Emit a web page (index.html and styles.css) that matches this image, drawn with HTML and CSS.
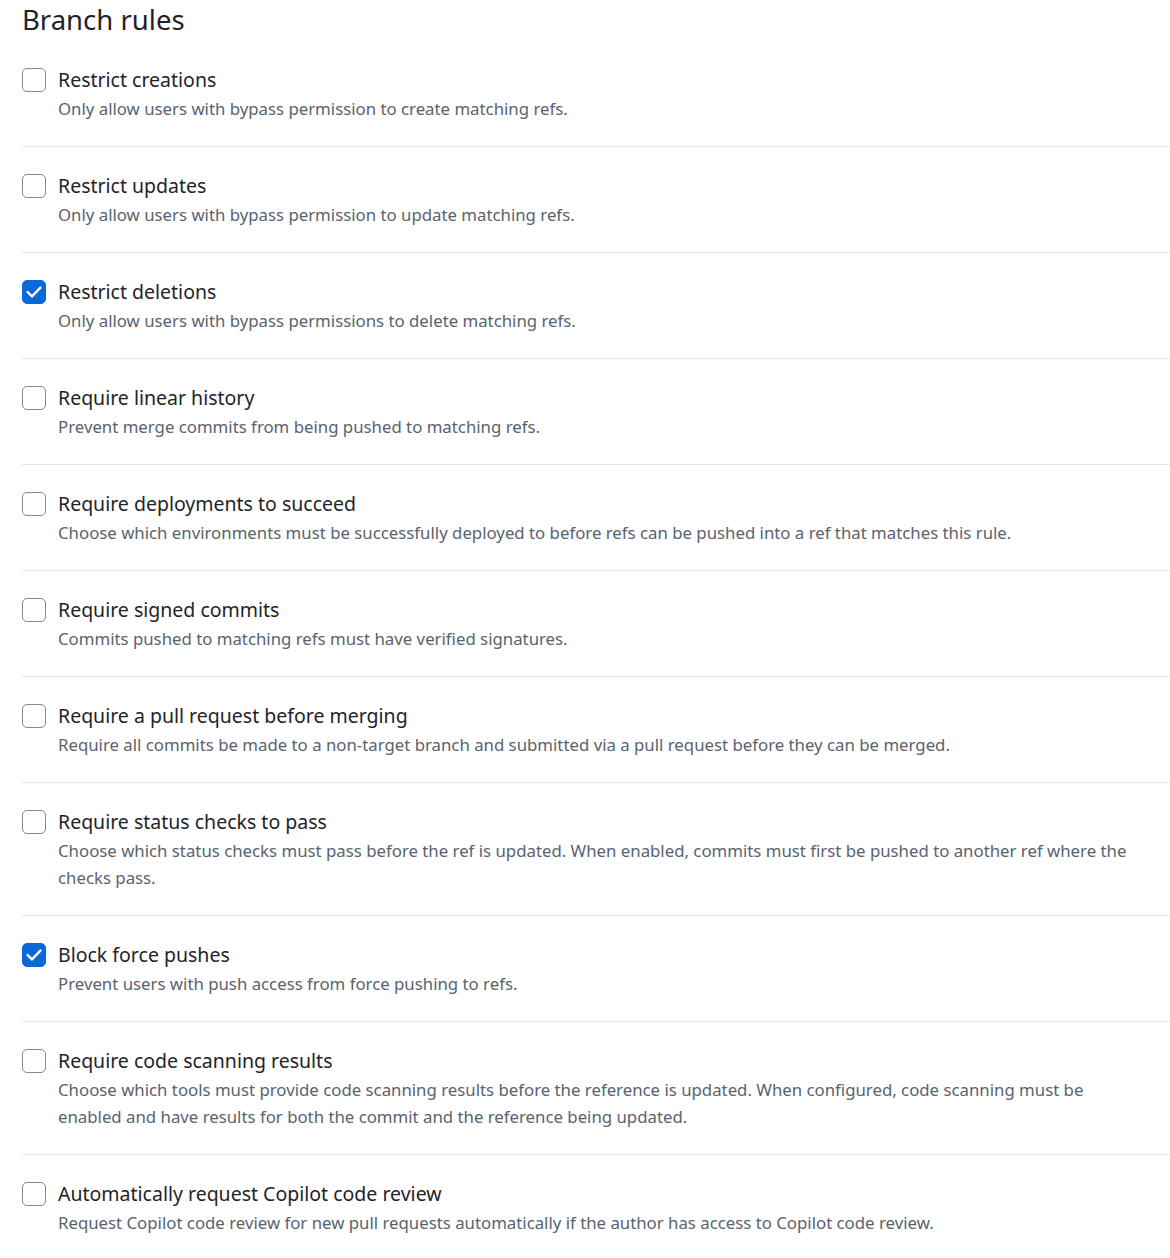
FILE: index.html
```html
<!DOCTYPE html>
<html lang="en">
<head>
    <meta charset="UTF-8">
    <title>Branch rules</title>
    <link rel="stylesheet" href="styles.css">
</head>
<body>
    <h2 class="section-title">Branch rules</h2>

    <ul class="rule-list">
        <li class="rule">
            <span class="check"></span>
            <div class="rule-text">
                <div class="rule-name">Restrict creations</div>
                <div class="rule-desc">Only allow users with bypass permission to create matching refs.</div>
            </div>
        </li>
        <li class="rule">
            <span class="check"></span>
            <div class="rule-text">
                <div class="rule-name">Restrict updates</div>
                <div class="rule-desc">Only allow users with bypass permission to update matching refs.</div>
            </div>
        </li>
        <li class="rule">
            <span class="check checked"><svg viewBox="0 0 24 24" width="24" height="24"><path d="M5 12l4.8 4.8L19 7.2" fill="none" stroke="#fff" stroke-width="2.6" stroke-linecap="round" stroke-linejoin="round"/></svg></span>
            <div class="rule-text">
                <div class="rule-name">Restrict deletions</div>
                <div class="rule-desc">Only allow users with bypass permissions to delete matching refs.</div>
            </div>
        </li>
        <li class="rule">
            <span class="check"></span>
            <div class="rule-text">
                <div class="rule-name">Require linear history</div>
                <div class="rule-desc">Prevent merge commits from being pushed to matching refs.</div>
            </div>
        </li>
        <li class="rule">
            <span class="check"></span>
            <div class="rule-text">
                <div class="rule-name">Require deployments to succeed</div>
                <div class="rule-desc">Choose which environments must be successfully deployed to before refs can be pushed into a ref that matches this rule.</div>
            </div>
        </li>
        <li class="rule">
            <span class="check"></span>
            <div class="rule-text">
                <div class="rule-name">Require signed commits</div>
                <div class="rule-desc">Commits pushed to matching refs must have verified signatures.</div>
            </div>
        </li>
        <li class="rule">
            <span class="check"></span>
            <div class="rule-text">
                <div class="rule-name">Require a pull request before merging</div>
                <div class="rule-desc">Require all commits be made to a non-target branch and submitted via a pull request before they can be merged.</div>
            </div>
        </li>
        <li class="rule">
            <span class="check"></span>
            <div class="rule-text">
                <div class="rule-name">Require status checks to pass</div>
                <div class="rule-desc">Choose which status checks must pass before the ref is updated. When enabled, commits must first be pushed to another ref where the checks pass.</div>
            </div>
        </li>
        <li class="rule">
            <span class="check checked"><svg viewBox="0 0 24 24" width="24" height="24"><path d="M5 12l4.8 4.8L19 7.2" fill="none" stroke="#fff" stroke-width="2.6" stroke-linecap="round" stroke-linejoin="round"/></svg></span>
            <div class="rule-text">
                <div class="rule-name">Block force pushes</div>
                <div class="rule-desc">Prevent users with push access from force pushing to refs.</div>
            </div>
        </li>
        <li class="rule">
            <span class="check"></span>
            <div class="rule-text">
                <div class="rule-name">Require code scanning results</div>
                <div class="rule-desc">Choose which tools must provide code scanning results before the reference is updated. When configured, code scanning must be enabled and have results for both the commit and the reference being updated.</div>
            </div>
        </li>
        <li class="rule">
            <span class="check"></span>
            <div class="rule-text">
                <div class="rule-name">Automatically request Copilot code review</div>
                <div class="rule-desc">Request Copilot code review for new pull requests automatically if the author has access to Copilot code review.</div>
            </div>
        </li>
    </ul>
</body>
</html>
```

FILE: styles.css
```css
body {
    font-family: "Noto Sans", sans-serif;
    margin: 0;
    padding: 0 0 0 22px;
    background-color: #ffffff;
    color: #1f2328;
}

.section-title {
    font-size: 27.5px;
    font-weight: 400;
    line-height: 40px;
    margin: 0 0 25px 0;
}

.rule-list {
    list-style: none;
    margin: 0;
    padding: 0;
}

.rule {
    display: flex;
    gap: 12px;
    padding: 24px 0 24px 0;
    border-bottom: 1px solid #e3e6ea;
}

.rule:first-child {
    padding-top: 0;
}

.rule-text {
    padding-right: 22px;
}

.check {
    flex: none;
    width: 24px;
    height: 24px;
    box-sizing: border-box;
    margin-top: 3px;
    border: 1.5px solid #818b98;
    border-radius: 5px;
    display: flex;
    align-items: center;
    justify-content: center;
}

.check.checked {
    background-color: #0969da;
    border-color: #0969da;
}

.rule-name {
    font-size: 19.5px;
    line-height: 30px;
}

.rule-desc {
    font-size: 16.8px;
    line-height: 27px;
    color: #59636e;
}
```
